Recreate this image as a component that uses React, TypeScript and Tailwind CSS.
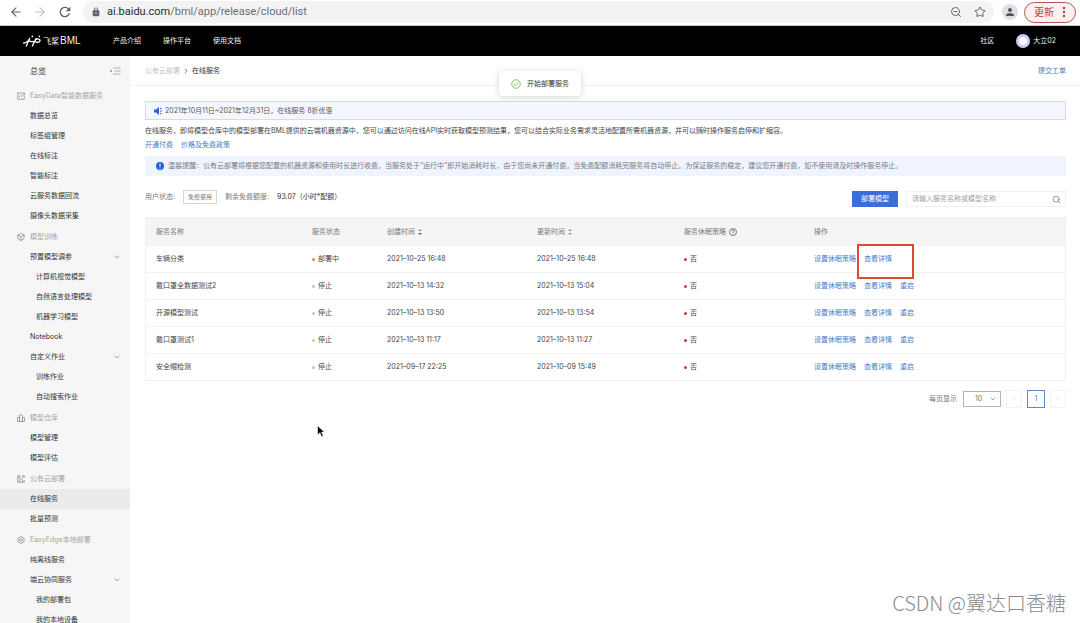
import type { ReactNode } from "react";
import { ArrowLeft, ArrowRight, ChevronDown, ChevronLeft, ChevronRight, Search, Star, ZoomOut } from "lucide-react";
import { MdLock, MdPerson, MdRefresh } from "react-icons/md";

interface MenuItem {
  label: string;
  nested?: boolean;
  expandable?: boolean;
  active?: boolean;
}

interface MenuGroup {
  title: string;
  icon: ReactNode;
  items: MenuItem[];
}

interface Service {
  name: string;
  status: string;
  deploying?: boolean;
  created: string;
  updated: string;
}

function MenuIcon({ children }: { children: ReactNode }) {
  return (
    <svg viewBox="0 0 16 16" className="w-2 h-2 shrink-0" fill="none" stroke="#8a8a8a" strokeWidth="1.5">
      {children}
    </svg>
  );
}

const menu: MenuGroup[] = [
  {
    title: "EasyData智能数据服务",
    icon: (
      <MenuIcon>
        <path d="M10 2H1.5v12.5h13V7" />
        <path d="M4 10l3-3 2 2 5.5-6M10.5 2H15v4" />
      </MenuIcon>
    ),
    items: [
      { label: "数据总览" },
      { label: "标签组管理" },
      { label: "在线标注" },
      { label: "智能标注" },
      { label: "云服务数据回流" },
      { label: "摄像头数据采集" },
    ],
  },
  {
    title: "模型训练",
    icon: (
      <MenuIcon>
        <path d="M8 1l6 3.3v7.2L8 15l-6-3.5V4.3z" />
        <path d="M0 5h4l4 3 4-3h4M8 8v7" />
      </MenuIcon>
    ),
    items: [
      { label: "预置模型调参", expandable: true },
      { label: "计算机视觉模型", nested: true },
      { label: "自然语言处理模型", nested: true },
      { label: "机器学习模型", nested: true },
      { label: "Notebook" },
      { label: "自定义作业", expandable: true },
      { label: "训练作业", nested: true },
      { label: "自动搜索作业", nested: true },
    ],
  },
  {
    title: "模型仓库",
    icon: (
      <MenuIcon>
        <path d="M1 7h4v8H1zM5 2l3-1 3 2v12H5zM11 7h4v8h-4z" />
      </MenuIcon>
    ),
    items: [{ label: "模型管理" }, { label: "模型评估" }],
  },
  {
    title: "公有云部署",
    icon: (
      <MenuIcon>
        <path d="M6 1.5H1.5v13h13V10M1.5 6l4-1 1-3.500M10 1.5h4.500V6M14 2l-4 4M5 14V9l3-2 3 2v5" />
      </MenuIcon>
    ),
    items: [{ label: "在线服务", active: true }, { label: "批量预测" }],
  },
  {
    title: "EasyEdge本地部署",
    icon: (
      <MenuIcon>
        <path d="M8 1l6 3.5v7L8 15l-6-3.5v-7z" />
        <circle cx="8" cy="8" r="2.5" />
      </MenuIcon>
    ),
    items: [
      { label: "纯离线服务" },
      { label: "端云协同服务", expandable: true },
      { label: "我的部署包", nested: true },
      { label: "我的本地设备", nested: true },
    ],
  },
];

const services: Service[] = [
  { name: "车辆分类", status: "部署中", deploying: true, created: "2021–10–25 16:48", updated: "2021–10–25 16:48" },
  { name: "戴口罩全数据测试2", status: "停止", created: "2021–10–13 14:32", updated: "2021–10–13 15:04" },
  { name: "开源模型测试", status: "停止", created: "2021–10–13 13:50", updated: "2021–10–13 13:54" },
  { name: "戴口罩测试1", status: "停止", created: "2021–10–13 11:17", updated: "2021–10–13 11:27" },
  { name: "安全帽检测", status: "停止", created: "2021–09–17 22:25", updated: "2021–10–09 15:49" },
];

function BrowserBar() {
  return (
    <div className="flex items-center h-[26px] shrink-0 pl-[9px] pr-1 pb-px bg-white border-b border-[#c8c8c8] text-[#5f6368]">
      <button aria-label="后退" className="mr-[10px]">
        <ArrowLeft className="w-[14px] h-[14px]" />
      </button>
      <button aria-label="前进" className="mr-[10px] text-[#bdbfc2]">
        <ArrowRight className="w-[14px] h-[14px]" />
      </button>
      <button aria-label="刷新" className="mr-[10px]">
        <MdRefresh className="w-4 h-4" />
      </button>
      <div className="flex items-center flex-1 h-[22px] rounded-full bg-[#f3f3f4] px-2 mr-2">
        <MdLock className="w-[10px] h-[10px] mr-[6px]" />
        <div className="flex-1 font-['Roboto',sans-serif] text-[11px] leading-4 text-[#6b6e72]">
          <span className="text-[#27292c]">ai.baidu.com</span>/bml/app/release/cloud/list
        </div>
        <ZoomOut className="w-3 h-3 mr-3" />
        <Star className="w-3 h-3" />
      </div>
      <span className="flex items-center justify-center w-4 h-4 mr-[6px] rounded-full bg-[#dde1e6]">
        <MdPerson className="w-3 h-3 text-[#50555c]" />
      </span>
      <button className="flex items-center h-[21px] w-[52px] pl-[9px] rounded-full border border-[#b4545a] bg-[#fcf0ef] text-[10px] leading-4 text-[#b3403f]">
        更新
        <svg viewBox="0 0 4 12" className="w-1 h-3 ml-2" fill="currentColor">
          <circle cx="2" cy="2" r="1.2" />
          <circle cx="2" cy="6" r="1.2" />
          <circle cx="2" cy="10" r="1.2" />
        </svg>
      </button>
    </div>
  );
}

function TopNav() {
  return (
    <header className="flex items-center h-[30px] shrink-0 pl-[23px] pr-6 bg-black text-[#f0f0f0]">
      <a href="#" className="flex items-center w-[90px]">
        <svg viewBox="0 0 54 36" className="w-[18px] h-3 mr-[2px]" fill="none" stroke="#fff" strokeWidth="4" strokeLinecap="round">
          <path d="M2 24c8 1 9-6 16-6 5 0 7 4 14 1" />
          <path d="M20 10L10 33M39 11L28 33" />
          <path d="M39 13c8-4 14 1 11 6-3 4-9 3-14 1" />
          <path d="M28 4v.1M49 4v.1" strokeWidth="5" />
        </svg>
        <span className="text-[8px] leading-3">飞桨</span>
        <span className="ml-px font-['Liberation_Sans',sans-serif] text-[10px] leading-3">BML</span>
      </a>
      <nav className="flex flex-1 gap-[22px]">
        <a href="#">产品介绍</a>
        <a href="#">操作平台</a>
        <a href="#">使用文档</a>
      </nav>
      <a href="#" className="mr-[22px]">社区</a>
      <a href="#" className="flex items-center gap-[3px]">
        <span className="flex items-center justify-center w-[14px] h-[14px] rounded-full bg-[#c9cdf3]">
          <span className="w-2 h-2 rounded-full bg-white" />
        </span>
        大立02
      </a>
    </header>
  );
}

function Sidebar() {
  return (
    <aside className="w-[130px] shrink-0 overflow-hidden bg-[#f6f6f6] text-[#333]">
      <div className="flex items-center justify-between h-[30px] pl-[30px] pr-[9px]">
        <a href="#" className="text-[8px]">总览</a>
        <button aria-label="收起菜单">
          <svg viewBox="0 0 24 16" className="w-3 h-2" fill="none" stroke="#999" strokeWidth="1.5">
            <path d="M8 2h15M11 8h12M8 14h15" />
            <path d="M6 5v6L1 8z" fill="#999" stroke="none" />
          </svg>
        </button>
      </div>
      <div className="flex flex-col gap-px">
        {menu.map((group) => (
          <div key={group.title}>
            <div className="flex items-center gap-[5px] h-5 pl-[17px] text-[#a6a6a6]">
              {group.icon}
              {group.title}
            </div>
            {group.items.map((item) => (
              <a
                key={item.label}
                href="#"
                className={`flex items-center justify-between h-5 pr-[9px] ${item.nested ? "pl-9" : "pl-[30px]"} ${item.active ? "bg-[#ebebeb]" : ""}`}
              >
                {item.label}
                {item.expandable && <ChevronDown className="w-2 h-2 text-[#777]" />}
              </a>
            ))}
          </div>
        ))}
      </div>
    </aside>
  );
}

function SortIcon({ active }: { active?: boolean }) {
  return (
    <svg viewBox="0 0 8 12" className="inline w-1 h-[6px] ml-[3px] align-middle">
      <path d="M4 0l4 4H0z" fill="#999" />
      <path d="M4 12l4-4H0z" fill={active ? "#2f63d8" : "#999"} />
    </svg>
  );
}

function ServiceTable() {
  return (
    <table className="w-full table-fixed border border-[#f0f0f0] border-separate border-spacing-0 text-left text-[#444]">
      <thead className="bg-[#f5f5f5] text-[#777]">
        <tr className="h-7">
          <th className="w-[156px] pl-[10px] font-normal">服务名称</th>
          <th className="w-[75px] pl-[10px] font-normal">服务状态</th>
          <th className="w-[150px] pl-[10px] font-normal">
            创建时间
            <SortIcon active />
          </th>
          <th className="w-[147px] pl-[10px] font-normal">
            更新时间
            <SortIcon />
          </th>
          <th className="w-[130px] pl-[10px] font-normal">
            服务休眠策略
            <svg viewBox="0 0 16 16" className="inline w-2 h-2 ml-[3px] align-middle" fill="none" stroke="#555" strokeWidth="1.5">
              <circle cx="8" cy="8" r="7" />
              <path d="M5.5 6.5c0-3.500 5-3.500 5 0C10.500 8 8 8 8 10M8 11.500v1.500" />
            </svg>
          </th>
          <th className="pl-[10px] font-normal">操作</th>
        </tr>
      </thead>
      <tbody className="[&_td]:border-b [&_td]:border-[#f0f0f0] [&_td]:pl-[10px] [&_tr:last-child_td]:border-b-0">
        {services.map((service) => (
          <tr key={service.name} className="h-[27px] last:h-[26px]">
            <td>{service.name}</td>
            <td>
              <span className="flex items-center gap-[3px]">
                <i className={`w-[3px] h-[3px] rounded-full ${service.deploying ? "bg-[#d5902f]" : "bg-[#c4c4c4]"}`} />
                {service.status}
              </span>
            </td>
            <td>{service.created}</td>
            <td>{service.updated}</td>
            <td>
              <span className="flex items-center gap-[3px]">
                <i className="w-[3px] h-[3px] rounded-full bg-[#c23a2e]" />否
              </span>
            </td>
            <td>
              <div className="flex gap-2 text-[#4a7bc8]">
                <a href="#">设置休眠策略</a>
                <a href="#" className="relative">
                  查看详情
                  {service.deploying && (
                    <span className="absolute -left-[7px] -top-[10px] w-[57px] h-[35px] border-2 border-[#dc4a30]" />
                  )}
                </a>
                {!service.deploying && <a href="#">重启</a>}
              </div>
            </td>
          </tr>
        ))}
      </tbody>
    </table>
  );
}

function Pagination() {
  return (
    <div className="flex items-center justify-end mt-[9px] text-[#777]">
      <label htmlFor="page-size">每页显示</label>
      <div className="relative ml-[6px] mr-[5px]">
        <select id="page-size" className="appearance-none block w-[38px] h-4 pl-[11px] border border-[#b0b3bb] bg-white">
          <option>10</option>
        </select>
        <ChevronDown className="absolute right-1 top-1 w-2 h-2 pointer-events-none" />
      </div>
      <button aria-label="上一页" className="flex items-center justify-center w-4 h-[18px] border border-[#f3f3f3] text-[#ddd]">
        <ChevronLeft className="w-2 h-2" />
      </button>
      <button className="w-[18px] h-[18px] mx-[5px] border border-[#5b8cc9] text-[#4a7bc8]">1</button>
      <button aria-label="下一页" className="flex items-center justify-center w-4 h-[18px] border border-[#f3f3f3] text-[#ddd]">
        <ChevronRight className="w-2 h-2" />
      </button>
    </div>
  );
}

export default function App() {
  return (
    <div
      lang="zh-CN"
      className="relative flex flex-col h-screen overflow-hidden bg-white font-['Inter','Noto_Sans_CJK_SC',sans-serif] text-[7px] leading-[10px]"
    >
      <BrowserBar />
      <TopNav />
      <div className="flex flex-1 min-h-0">
        <Sidebar />
        <main className="flex-1 min-w-0">
          {/* Breadcrumb */}
          <div className="flex items-center h-[30px] pl-[15px] pr-[14px] border-b border-[#f0f0f0]">
            <a href="#" className="text-[#c4c4c4]">公有云部署</a>
            <ChevronRight className="w-2 h-2 mx-[2px] text-[#555]" />
            <span className="flex-1 text-[#333]">在线服务</span>
            <a href="#" className="text-[#4a7bc8]">提交工单</a>
          </div>

          <div className="pl-[15px] pr-[14px] pt-[15px]">
            {/* Promotion */}
            <div className="flex items-center h-[19px] pl-2 border border-[#d5d9f2] bg-[#f5f7ff] text-[#555]">
              <svg viewBox="0 0 16 16" className="w-2 h-2 mr-[3px]" fill="#2f63d8">
                <path d="M0 5h4l6-5v16l-6-5H0z" />
                <path d="M12 2h3v2h-3zM12 7h4v2h-4zM12 12h3v2h-3z" />
              </svg>
              2021年10月11日~2021年12月31日，在线服务 8折优惠
            </div>

            <p className="mt-[6px] text-[#444]">
              在线服务，即将模型仓库中的模型部署在BML提供的云端机器资源中，您可以通过访问在线API实时获取模型预测结果，您可以结合实际业务需求灵活地配置所需机器资源，并可以随时操作服务启停和扩缩容。
            </p>
            <div className="flex gap-2 mt-1 text-[#4a7bc8]">
              <a href="#">开通付费</a>
              <a href="#">价格及免费政策</a>
            </div>

            {/* Billing reminder */}
            <div className="flex items-center h-5 mt-[6px] pl-[11px] bg-[#eff4fe] text-[#747a86]">
              <svg viewBox="0 0 16 16" className="w-2 h-2 mr-1">
                <circle cx="8" cy="8" r="8" fill="#2460d8" />
                <path d="M8 3v6M8 11v2" stroke="#fff" strokeWidth="2" />
              </svg>
              温馨提醒：公有云部署将根据您配置的机器资源和使用时长进行收费，当服务处于“运行中”即开始消耗时长，由于您尚未开通付费，当免费配额消耗完服务将自动停止。为保证服务的稳定，建议您开通付费，如不使用请及时操作服务停止。
            </div>

            {/* Toolbar */}
            <div className="flex items-start mt-[14px] mb-[10px] text-[#777]">
              <div className="flex items-center flex-1">
                用户状态:
                <span className="flex items-center h-[14px] mx-2 px-1 border border-[#d6d6d6] text-[6px]">免费使用</span>
                剩余免费额度:
                <span className="ml-2 text-[#333]">93.07（小时*配额）</span>
              </div>
              <button className="w-[46px] h-4 mt-px mr-2 bg-[#3a6fdb] text-white">部署模型</button>
              <div className="flex items-center w-40 h-4 mt-px pl-[5px] pr-1 border border-[#f0f0f0]">
                <input
                  aria-label="搜索服务"
                  placeholder="请输入服务名称或模型名称"
                  className="flex-1 min-w-0 outline-none placeholder:text-[#a0a0a0]"
                />
                <Search className="w-[9px] h-[9px]" />
              </div>
            </div>

            <ServiceTable />
            <Pagination />
          </div>
        </main>
      </div>

      {/* Toast */}
      <div className="absolute left-1/2 top-[71px] -translate-x-1/2 flex items-center w-[82px] h-[25px] pl-3 bg-white rounded-sm shadow-[0_1px_6px_rgba(0,0,0,0.18)] text-[#333]">
        <svg viewBox="0 0 20 20" className="w-[10px] h-[10px] mr-[6px]" fill="none" stroke="#7cbf52" strokeWidth="1.8">
          <circle cx="10" cy="10" r="8.5" />
          <path d="M5.5 10.5l3 3 6-6.5" />
        </svg>
        开始部署服务
      </div>

      {/* Mouse pointer */}
      <svg viewBox="0 0 14 22" className="absolute left-[317px] top-[425px] w-2 h-[13px]" stroke="#fff" strokeWidth="1">
        <path d="M1 1v16l4-4 3 7 3-1-3-7h5z" fill="#000" />
      </svg>

      <div className="absolute right-[14px] bottom-[5px] font-['Noto_Sans_CJK_SC',sans-serif] font-light text-[20px] leading-[30px] text-[#8c8c8c]">
        CSDN @翼达口香糖
      </div>
    </div>
  );
}
